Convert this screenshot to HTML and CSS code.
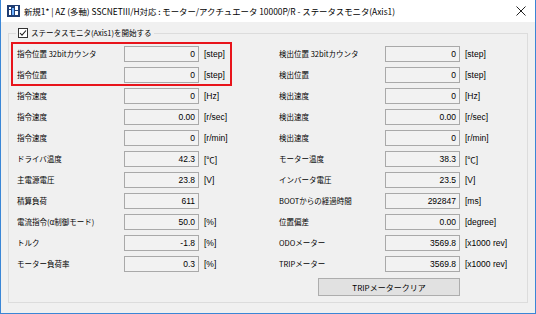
FILE: index.html
```html
<!DOCTYPE html>
<html lang="ja">
<head>
<meta charset="utf-8">
<link rel="stylesheet" href="styles.css">
</head>
<body>
<div class="window">
  <div class="titlebar">
    <svg class="app-icon" width="13" height="12" viewBox="0 0 13 12">
      <rect x="0" y="0" width="13" height="12" fill="#1f3d73"/>
      <rect x="2" y="2" width="2" height="2" fill="#ffffff"/>
      <rect x="2" y="5" width="2" height="5" fill="#ffffff"/>
      <rect x="5" y="3" width="2" height="7" fill="#6fb2ff"/>
      <rect x="8" y="1" width="3" height="9" fill="#ffffff"/>
      <rect x="8" y="5" width="3" height="1" fill="#1f3d73"/>
    </svg>
    <span class="title">新規1* | AZ (多軸) SSCNETIII/H対応 : モーター/アクチュエータ 10000P/R - ステータスモニタ(Axis1)</span>
    <svg class="close" width="10" height="10" viewBox="0 0 10 10">
      <path d="M0.5 0.5 L9.5 9.5 M9.5 0.5 L0.5 9.5" stroke="#222" stroke-width="1"/>
    </svg>
  </div>
  <div class="client">
    <fieldset class="group">
      <legend class="caption">
        <svg class="check" width="10" height="10" viewBox="0 0 10 10">
          <rect x="0.5" y="0.5" width="9" height="9" fill="#ffffff" stroke="#333"/>
          <path d="M2 5 L4 7.2 L8 2.5" fill="none" stroke="#222" stroke-width="1.1"/>
        </svg>
        <span>ステータスモニタ(Axis1)を開始する</span>
      </legend>
      <div class="columns">
        <div class="col">
          <div class="highlight">
            <div class="row"><span class="label">指令位置 32bitカウンタ</span><span class="box">0</span><span class="unit">[step]</span></div>
            <div class="row"><span class="label">指令位置</span><span class="box">0</span><span class="unit">[step]</span></div>
          </div>
          <div class="row"><span class="label">指令速度</span><span class="box">0</span><span class="unit">[Hz]</span></div>
          <div class="row"><span class="label">指令速度</span><span class="box">0.00</span><span class="unit">[r/sec]</span></div>
          <div class="row"><span class="label">指令速度</span><span class="box">0</span><span class="unit">[r/min]</span></div>
          <div class="row"><span class="label">ドライバ温度</span><span class="box">42.3</span><span class="unit">[℃]</span></div>
          <div class="row"><span class="label">主電源電圧</span><span class="box">23.8</span><span class="unit">[V]</span></div>
          <div class="row"><span class="label">積算負荷</span><span class="box">611</span><span class="unit"></span></div>
          <div class="row"><span class="label">電流指令(α制御モード)</span><span class="box">50.0</span><span class="unit">[%]</span></div>
          <div class="row"><span class="label">トルク</span><span class="box">-1.8</span><span class="unit">[%]</span></div>
          <div class="row"><span class="label">モーター負荷率</span><span class="box">0.3</span><span class="unit">[%]</span></div>
        </div>
        <div class="col">
          <div class="row"><span class="label">検出位置 32bitカウンタ</span><span class="box">0</span><span class="unit">[step]</span></div>
          <div class="row"><span class="label">検出位置</span><span class="box">0</span><span class="unit">[step]</span></div>
          <div class="row"><span class="label">検出速度</span><span class="box">0</span><span class="unit">[Hz]</span></div>
          <div class="row"><span class="label">検出速度</span><span class="box">0.00</span><span class="unit">[r/sec]</span></div>
          <div class="row"><span class="label">検出速度</span><span class="box">0</span><span class="unit">[r/min]</span></div>
          <div class="row"><span class="label">モーター温度</span><span class="box">38.3</span><span class="unit">[℃]</span></div>
          <div class="row"><span class="label">インバータ電圧</span><span class="box">23.5</span><span class="unit">[V]</span></div>
          <div class="row"><span class="label">BOOTからの経過時間</span><span class="box">292847</span><span class="unit">[ms]</span></div>
          <div class="row"><span class="label">位置偏差</span><span class="box">0.00</span><span class="unit">[degree]</span></div>
          <div class="row"><span class="label">ODOメーター</span><span class="box">3569.8</span><span class="unit">[x1000 rev]</span></div>
          <div class="row"><span class="label">TRIPメーター</span><span class="box">3569.8</span><span class="unit">[x1000 rev]</span></div>
          <button class="btn" type="button">TRIPメータークリア</button>
        </div>
      </div>
    </fieldset>
  </div>
</div>
</body>
</html>
```

FILE: styles.css
```css
* { box-sizing: border-box; }
html, body { margin: 0; padding: 0; }
body {
  width: 536px;
  height: 314px;
  font-family: "Noto Sans CJK JP", "Liberation Sans", sans-serif;
  font-size: 7.5px;
  color: #000;
  background: #ffffff;
}
.window {
  width: 536px;
  height: 314px;
  border: 1px solid #3a86d6;
  border-top: none;
  display: flex;
  flex-direction: column;
  background: #f0f0f0;
}
.titlebar {
  height: 22px;
  background: #ffffff;
  display: flex;
  align-items: center;
  padding-left: 6px;
  padding-right: 9px;
  flex: none;
}
.app-icon { flex: none; margin-right: 4px; }
.title {
  font-size: 8.4px;
  color: #000;
  white-space: nowrap;
}
.close { margin-left: auto; flex: none; }
.client {
  flex: 1;
  padding: 5px 7px 10px 7px;
  display: flex;
  flex-direction: column;
}
.group {
  flex: 1;
  margin: 0;
  border: 1px solid #dcdcdc;
  padding: 1px 3px 0 3px;
  min-width: 0;
}
.caption {
  margin-left: 4px;
  padding: 0 2px 0 2px;
  height: 12px;
  line-height: 12px;
  display: flex;
  align-items: center;
  font-size: 7.5px;
  white-space: nowrap;
}
.check { margin-right: 3px; flex: none; }
.columns {
  display: grid;
  grid-template-columns: 219px 240px;
  column-gap: 43px;
  margin-top: 3px;
}
.col { display: flex; flex-direction: column; }
.highlight {
  outline: 2px solid #e8141b;
  outline-offset: -1px;
}
.row {
  height: 21px;
  display: flex;
  align-items: center;
  padding-left: 5px;
  white-space: nowrap;
}
.label { width: 107px; flex: none; }
.col + .col .label { width: 106px; }
.box {
  width: 75px;
  height: 16px;
  flex: none;
  border: 1px solid #a9a9a9;
  background: #f2f2f2;
  text-align: right;
  padding-right: 3px;
  line-height: 14px;
  font-family: "Liberation Sans", sans-serif;
  font-size: 8.5px;
}
.unit {
  margin-left: 5px;
  font-family: "Liberation Sans", "Noto Sans CJK JP", sans-serif;
  font-size: 8.5px;
}
.btn {
  margin: 4px 0 0 44px;
  width: 142px;
  height: 18px;
  border: 1px solid #adadad;
  background: #e1e1e1;
  font-family: "Noto Sans CJK JP", "Liberation Sans", sans-serif;
  font-size: 8px;
  padding: 0;
  color: #000;
}
```
